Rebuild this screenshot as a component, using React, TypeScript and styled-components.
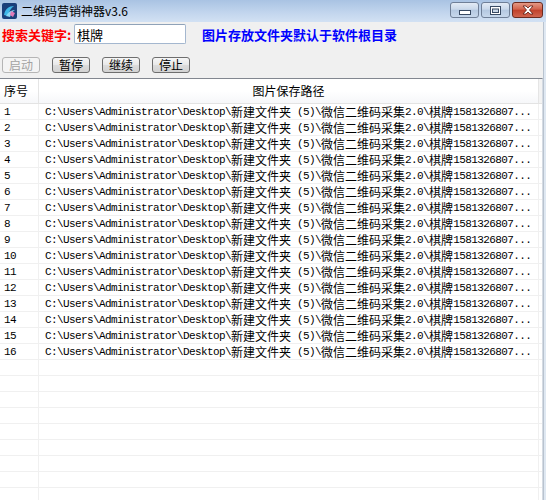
import React from "react";
import styled, { createGlobalStyle } from "styled-components";

const GlobalStyle = createGlobalStyle`
  html, body {
    margin: 0;
    padding: 0;
  }
  body {
    background: #f0f0f0;
    font-family: "Noto Sans CJK SC", "Noto Sans", sans-serif;
    overflow: hidden;
  }
`;

const PATH =
  "C:\\Users\\Administrator\\Desktop\\新建文件夹 (5)\\微信二维码采集2.0\\棋牌1581326807...";
const DATA_ROWS = 16;
const TOTAL_ROWS = 25;

// ascii runs are mono 6px per char, cjk runs 12px per char (like SimSun)
const MixedText = ({ text }: { text: string }) => {
  const parts = text.split(/([\u3000-\u9fff\uff00-\uffef]+)/).filter(Boolean);
  return (
    <>
      {parts.map((p, i) =>
        /[\u3000-\u9fff\uff00-\uffef]/.test(p) ? (
          <Cjk key={i}>{p}</Cjk>
        ) : (
          <Ascii key={i}>{p}</Ascii>
        )
      )}
    </>
  );
};

const AppIcon = () => (
  <svg width="15" height="16" viewBox="0 0 15 16">
    <rect x="0" y="0" width="15" height="16" rx="2" fill="#1b3f7a" />
    <path d="M2 12 C3 6 7 3 12 3 C9 5 7 8 6 13 Z" fill="#3fb7e8" />
    <path d="M4 13 C6 9 9 7 13 7 C10 9 9 11 8 14 Z" fill="#8ad8f5" />
    <path d="M9 8 L13 10 L11 14 L8 12 Z" fill="#e07ab8" />
  </svg>
);

const App = () => {
  const rows = Array.from({ length: TOTAL_ROWS }, (_, i) => i);
  return (
    <Window>
      <GlobalStyle />
      <TitleBar>
        <TitleLeft>
          <AppIcon />
          <TitleText>二维码营销神器v3.6</TitleText>
        </TitleLeft>
        <CaptionButtons>
          <CaptionButton>
            <svg width="12" height="6" viewBox="0 0 12 6">
              <rect x="0.5" y="0.5" width="11" height="4" fill="#fff" stroke="#384a63" />
            </svg>
          </CaptionButton>
          <CaptionButton>
            <svg width="11" height="9" viewBox="0 0 11 9">
              <rect x="0.5" y="0.5" width="10" height="8" fill="#fff" stroke="#384a63" />
              <rect x="2.5" y="3" width="6" height="3.5" fill="#c9d6e6" stroke="#384a63" />
            </svg>
          </CaptionButton>
          <CloseButton>
            <svg width="14" height="10" viewBox="0 0 14 10">
              <path
                d="M2 1 L5 1 L7 3 L9 1 L12 1 L8.5 5 L12 9 L9 9 L7 7 L5 9 L2 9 L5.5 5 Z"
                fill="#fff"
                stroke="#5a1a12"
                strokeWidth="0.8"
                strokeLinejoin="round"
              />
            </svg>
          </CloseButton>
        </CaptionButtons>
      </TitleBar>

      <Body>
        <Client>
          <SearchRow>
            <KeywordLabel>搜索关键字:</KeywordLabel>
            <KeywordInput defaultValue="棋牌" />
            <Notice>图片存放文件夹默认于软件根目录</Notice>
          </SearchRow>

          <ButtonRow>
            <ActionButton disabled>启动</ActionButton>
            <ActionButton>暂停</ActionButton>
            <ActionButton>继续</ActionButton>
            <ActionButton>停止</ActionButton>
          </ButtonRow>

          <ListView>
            <HeaderRow>
              <HeaderCell>序号</HeaderCell>
              <HeaderCell $center>图片保存路径</HeaderCell>
              <HeaderFiller />
            </HeaderRow>
            {rows.map((i) => (
              <Row key={i}>
                <Cell>{i < DATA_ROWS ? <Ascii>{i + 1}</Ascii> : null}</Cell>
                <PathCell>{i < DATA_ROWS ? <MixedText text={PATH} /> : null}</PathCell>
                <Filler />
              </Row>
            ))}
          </ListView>
        </Client>
        <RightFrame />
      </Body>
    </Window>
  );
};

const Window = styled.div`
  width: 546px;
  height: 500px;
  display: flex;
  flex-direction: column;
  overflow: hidden;
  background: #f0f0f0;
`;

const TitleBar = styled.div`
  height: 22px;
  flex: none;
  display: flex;
  align-items: flex-start;
  justify-content: space-between;
  background: linear-gradient(#a9c3e3, #c3d6ee 60%, #d2e1f3);
`;

const TitleLeft = styled.div`
  display: flex;
  align-items: center;
  gap: 4px;
  padding: 2px 0 0 2px;
  height: 17px;
`;

const TitleText = styled.span`
  font-size: 12px;
  color: #000;
  line-height: 17px;
  letter-spacing: 0;
`;

const CaptionButtons = styled.div`
  display: flex;
  gap: 2px;
  padding: 2px 3px 0 0;
`;

const CaptionButton = styled.div`
  width: 29px;
  height: 16px;
  box-sizing: border-box;
  border: 1px solid #6f7f97;
  border-radius: 3px;
  background: linear-gradient(#e3ebf5, #c9d8ea 45%, #b4c8e1 50%, #c7d8ec);
  display: flex;
  align-items: center;
  justify-content: center;
  svg {
    display: block;
  }
  &:first-child svg {
    margin-top: 5px;
  }
`;

const CloseButton = styled(CaptionButton)`
  width: 31px;
  border-color: #6b2a1f;
  background: linear-gradient(#e49a86, #d2634c 45%, #c0412b 50%, #d0654f);
`;

const Body = styled.div`
  flex: 1;
  display: flex;
  min-height: 0;
`;

const Client = styled.div`
  flex: 1;
  display: flex;
  flex-direction: column;
  min-width: 0;
`;

const RightFrame = styled.div`
  width: 2px;
  flex: none;
  border-left: 1px solid #b9c3cf;
  background: #dfe8f2;
`;

const SearchRow = styled.div`
  display: flex;
  align-items: center;
  height: 20px;
  margin-top: 2px;
  padding-left: 2px;
`;

const KeywordLabel = styled.span`
  font-size: 13px;
  font-weight: bold;
  color: #ff0000;
  width: 72px;
  flex: none;
`;

const KeywordInput = styled.input`
  width: 112px;
  height: 20px;
  box-sizing: border-box;
  border: 1px solid #a4b7cf;
  border-top-color: #8fa2b8;
  border-radius: 2px;
  background: #fff;
  padding: 0 2px;
  font-family: "Noto Sans CJK SC", sans-serif;
  font-size: 13px;
  color: #000;
  outline: none;
`;

const Notice = styled.span`
  margin-left: 16px;
  font-size: 13px;
  font-weight: bold;
  color: #0000ff;
  letter-spacing: 0;
`;

const ButtonRow = styled.div`
  display: flex;
  gap: 12px;
  padding-left: 2px;
  margin-top: 13px;
`;

const ActionButton = styled.button`
  width: 38px;
  height: 16px;
  box-sizing: border-box;
  padding: 0;
  border: 1px solid #6e6e6e;
  border-radius: 3px;
  background: linear-gradient(#f6f6f6, #e8e8e8 50%, #dcdcdc 51%, #d2d2d2);
  font-family: "Noto Sans CJK SC", sans-serif;
  font-size: 12px;
  line-height: 14px;
  color: #000;
  display: flex;
  align-items: center;
  justify-content: center;

  &:disabled {
    border-color: #b5b5b5;
    background: #f4f4f4;
    color: #a3a3a3;
  }
`;

const ListView = styled.div`
  margin-top: 5px;
  flex: 1;
  min-height: 0;
  overflow: hidden;
  background: #fff;
  border-top: 1px solid #828790;
  border-right: 1px solid #d5dbe3;
`;

const HeaderRow = styled.div`
  display: grid;
  grid-template-columns: 39px 500px 1fr;
  height: 24px;
  border-bottom: 1px solid #e3e3e3;
  background: linear-gradient(#ffffff, #ffffff 50%, #f6f7f9);
`;

const HeaderCell = styled.div<{ $center?: boolean }>`
  border-right: 1px solid #e5e5e5;
  font-size: 12px;
  line-height: 24px;
  color: #000;
  padding-left: ${(p) => (p.$center ? "0" : "4px")};
  text-align: ${(p) => (p.$center ? "center" : "left")};
  white-space: nowrap;
`;

const HeaderFiller = styled.div`
  background: #f3f3f3;
`;

const Row = styled.div`
  display: grid;
  grid-template-columns: 39px 500px 1fr;
  height: 15px;
  border-bottom: 1px solid #f0f0f0;
`;

const Cell = styled.div`
  border-right: 1px solid #f0f0f0;
  padding-left: 4px;
  display: flex;
  align-items: center;
  white-space: nowrap;
  overflow: hidden;
`;

const PathCell = styled(Cell)`
  padding-left: 6px;
`;

const Filler = styled.div``;

const Ascii = styled.span`
  font-family: "Liberation Mono", monospace;
  font-size: 11px;
  letter-spacing: -0.6px;
  color: #000;
  white-space: pre;
`;

const Cjk = styled.span`
  font-family: "Noto Sans CJK SC", sans-serif;
  font-size: 12px;
  line-height: 15px;
  color: #000;
`;

export default App;
